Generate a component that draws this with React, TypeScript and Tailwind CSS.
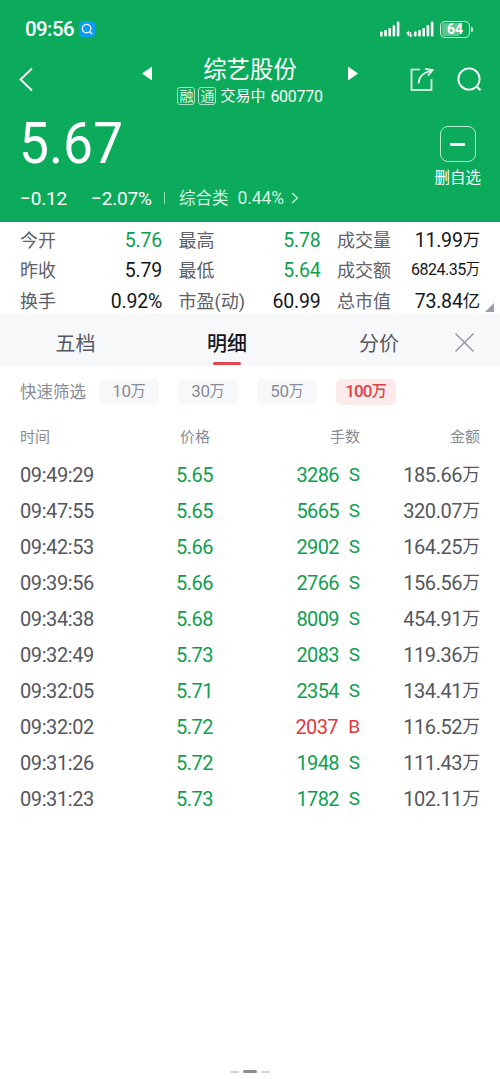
import React from 'react';
import clsx from 'clsx';

type Tone = 'down' | 'up' | 'flat';

const toneClass: Record<Tone, string> = {
  down: 'text-[#0d9f50]',
  up: 'text-[#e03a3e]',
  flat: 'text-[#15171b]',
};

const quotes: { label: string; value: string; tone: Tone; small?: boolean }[][] = [
  [
    { label: '今开', value: '5.76', tone: 'down' },
    { label: '最高', value: '5.78', tone: 'down' },
    { label: '成交量', value: '11.99万', tone: 'flat' },
  ],
  [
    { label: '昨收', value: '5.79', tone: 'flat' },
    { label: '最低', value: '5.64', tone: 'down' },
    { label: '成交额', value: '6824.35万', tone: 'flat', small: true },
  ],
  [
    { label: '换手', value: '0.92%', tone: 'flat' },
    { label: '市盈(动)', value: '60.99', tone: 'flat' },
    { label: '总市值', value: '73.84亿', tone: 'flat' },
  ],
];

const filters = ['10万', '30万', '50万', '100万'];

const trades = [
  { time: '09:49:29', price: '5.65', lots: '3286', side: 'S', amount: '185.66万' },
  { time: '09:47:55', price: '5.65', lots: '5665', side: 'S', amount: '320.07万' },
  { time: '09:42:53', price: '5.66', lots: '2902', side: 'S', amount: '164.25万' },
  { time: '09:39:56', price: '5.66', lots: '2766', side: 'S', amount: '156.56万' },
  { time: '09:34:38', price: '5.68', lots: '8009', side: 'S', amount: '454.91万' },
  { time: '09:32:49', price: '5.73', lots: '2083', side: 'S', amount: '119.36万' },
  { time: '09:32:05', price: '5.71', lots: '2354', side: 'S', amount: '134.41万' },
  { time: '09:32:02', price: '5.72', lots: '2037', side: 'B', amount: '116.52万' },
  { time: '09:31:26', price: '5.72', lots: '1948', side: 'S', amount: '111.43万' },
  { time: '09:31:23', price: '5.73', lots: '1782', side: 'S', amount: '102.11万' },
];

// The 万 / 亿 unit is set a little smaller than the digits before it
function Figure({ value, className }: { value: string; className?: string }) {
  const unit = /[万亿]$/.test(value) ? value.slice(-1) : '';
  return (
    <span className={className}>
      {unit ? value.slice(0, -1) : value}
      {unit && <span className="align-[0.04em] text-[0.89em] tracking-normal">{unit}</span>}
    </span>
  );
}

function Signal() {
  return (
    <svg width="20" height="16" viewBox="0 0 20 16" fill="currentColor">
      <rect x="0" y="10.5" width="2.6" height="5" rx="1" />
      <rect x="4.2" y="9" width="2.6" height="6.5" rx="1" />
      <rect x="8.4" y="7" width="2.6" height="8.5" rx="1" />
      <rect x="12.6" y="4" width="2.6" height="11.5" rx="1" />
      <rect x="16.8" y="0.5" width="2.6" height="15" rx="1" />
    </svg>
  );
}

function StatusBar() {
  return (
    <div className="flex h-[58px] items-center pl-[25px] pr-[27px]">
      <span className="w-[49px] text-[20.5px] font-medium leading-none tracking-[-0.6px]">09:56</span>
      <span className="ml-[5px] flex size-4 items-center justify-center rounded-[4px] bg-[#0d9cf5]">
        <svg width="12" height="12" viewBox="0 0 12 12" fill="none" stroke="currentColor" strokeWidth="1.2" strokeLinecap="round">
          <circle cx="5.6" cy="5.6" r="4.3" />
          <path d="M8.8 8.8 10.8 10.8" />
        </svg>
      </span>
      <div className="ml-auto flex items-center">
        <Signal />
        <svg className="ml-[6px]" width="8" height="16" viewBox="0 0 8 16" fill="none" stroke="currentColor" strokeWidth="1.3">
          <path d="M2.4 15V11L0.6 12.6M4.4 11V15.4L6.2 13.8" />
        </svg>
        <Signal />
        <span className="ml-[6px] flex h-[17px] w-[30px] rounded-[5px] border-[1.5px] border-[#d9f5e6] p-px">
          <span className="flex h-full w-full items-center justify-center rounded-[3px] bg-linear-to-r from-[#5cc48c] from-64% to-transparent to-64% text-[14px] font-bold leading-none">
            64
          </span>
        </span>
        <span className="ml-[1px] h-[5px] w-[2px] rounded-r bg-white" />
      </div>
    </div>
  );
}

function NavBar() {
  return (
    <div className="flex h-[54px] pl-[19px] pr-[18px]">
      <svg className="mt-[9px]" width="14" height="25" viewBox="0 0 14 25" fill="none" stroke="currentColor" strokeWidth="1.8">
        <path d="M13 1.5 1.5 12.5 13 23.5" />
      </svg>
      <svg className="ml-[109px] mt-[8px]" width="10" height="15" viewBox="0 0 10 15" fill="currentColor">
        <path d="M10 0.5V14.5L0 7.5Z" />
      </svg>
      <div className="flex w-[196px] flex-col items-center">
        <h1 className="mt-px text-[23.4px] font-normal leading-[22px]">综艺股份</h1>
        <div className="mt-[5px] flex h-[20px] items-center whitespace-nowrap text-[15px] leading-none">
          <span className="mr-[3px] flex size-[18px] items-center justify-center rounded-[3px] border border-[#a9e3c5] text-[14px] text-[#d6f4e4]">融</span>
          <span className="mr-[4px] flex size-[18px] items-center justify-center rounded-[3px] border border-[#a9e3c5] text-[14px] text-[#d6f4e4]">通</span>
          <span>交易中</span>
          <span className="ml-[5px] mt-px text-[16px] tracking-[-0.3px]">600770</span>
        </div>
      </div>
      <svg className="mt-[8px]" width="10" height="15" viewBox="0 0 10 15" fill="currentColor">
        <path d="M0 0.5V14.5L10 7.5Z" />
      </svg>
      <svg className="ml-auto mt-[9px]" width="24" height="25" viewBox="0 0 24 25" fill="none" stroke="currentColor" strokeWidth="1.7">
        <path d="M10 2.5H1.5V23H21.5V12" />
        <path d="M8.5 16.5C9 10 13 5.5 20.5 4" />
        <path d="M15 1.8 22.5 3.2 18 8.5" />
      </svg>
      <svg className="ml-[23px] mt-[9px]" width="25" height="25" viewBox="0 0 25 25" fill="none" stroke="currentColor" strokeWidth="1.8">
        <circle cx="12" cy="12" r="10.6" />
        <path d="M19.5 19.5 23.6 23.2" strokeWidth="2.2" />
      </svg>
    </div>
  );
}

function PricePanel() {
  return (
    <div className="flex h-[110px] justify-between pl-5 pr-[19px]">
      <div>
        <div className="-ml-px mt-[9px] h-[44px] origin-left scale-x-[0.92] text-[58px] leading-[44px]">5.67</div>
        <div className="mt-[23px] flex h-[20px] items-center whitespace-nowrap text-[19px] leading-none">
          <span className="w-[48px] tracking-[-0.2px]">−0.12</span>
          <span className="ml-[23px] w-[61px] tracking-[-0.2px]">−2.07%</span>
          <span className="ml-[12px] h-[12px] w-px bg-[#8fdcb5]" />
          <span className="ml-[14px] mt-[2px] text-[16.5px] text-[#d6f4e4]">综合类</span>
          <span className="ml-[9px] mt-px text-[17.5px] tracking-[-0.1px] text-[#d6f4e4]">0.44%</span>
          <svg className="ml-[7px]" width="8" height="12" viewBox="0 0 8 12" fill="none" stroke="#c5efd9" strokeWidth="1.4">
            <path d="M1 1 6.5 6 1 11" />
          </svg>
        </div>
      </div>
      <div className="flex flex-col items-center pt-[14px]">
        <span className="flex size-[36px] items-center justify-center rounded-[8px] border border-[#b9ebd1]">
          <span className="h-[3px] w-[15px] bg-white" />
        </span>
        <span className="mt-[6px] text-[15.5px] leading-[20px]">删自选</span>
      </div>
    </div>
  );
}

function Quotes() {
  return (
    <div className="relative h-[92px] px-5 pt-[4px]">
      {quotes.map((row, i) => (
        <div key={i} className={clsx('grid grid-cols-[142px_142px_143px] gap-x-[16.5px]', i === 2 ? 'mt-[2px]' : '')}>
          {row.map((q) => (
            <div key={q.label} className="flex h-[29.5px] items-center justify-between whitespace-nowrap leading-none">
              <span className="pt-px text-[18px] text-[#5d6068]">{q.label}</span>
              <Figure
                value={q.value}
                className={clsx(
                  toneClass[q.tone],
                  q.small ? 'text-[16px] tracking-[-0.5px]' : 'text-[19.5px] tracking-[-0.2px]'
                )}
              />
            </div>
          ))}
        </div>
      ))}
      <svg className="absolute bottom-[2px] right-[6px]" width="9" height="9" viewBox="0 0 9 9" fill="#9b9ea6">
        <path d="M9 0V9H0Z" />
      </svg>
    </div>
  );
}

function Tabs() {
  return (
    <div className="flex h-[52px] bg-[#f7f8fa] text-[20px] leading-[60px] text-[#55585f]">
      <span className="w-[151px] text-center">五档</span>
      <span className="flex w-[152px] flex-col items-center font-medium text-[#15171b]">
        <span className="h-[48px]">明细</span>
        <span className="h-[3px] w-[28px] rounded-full bg-[#e0484f]" />
      </span>
      <span className="w-[152px] text-center">分价</span>
      <svg className="mt-[19px]" width="19" height="19" viewBox="0 0 19 19" fill="none" stroke="#8d9098" strokeWidth="1.3">
        <path d="M0.5 0.5 18.5 18.5M18.5 0.5 0.5 18.5" />
      </svg>
    </div>
  );
}

function Filters() {
  return (
    <div className="flex h-[51px] items-center pl-5 text-[16.5px] leading-none text-[#878c96]">
      <span className="mr-[13px] mt-[3px]">快速筛选</span>
      <div className="flex gap-[19px]">
        {filters.map((f) => (
          <span
            key={f}
            className={clsx(
              'flex h-[26px] w-[60px] items-center justify-center rounded-[5px] text-[17px]',
              f === '100万' ? 'bg-[#fdebec] font-medium tracking-[-0.8px] text-[#e0404a]' : 'bg-[#f7f8fa] tracking-[-0.4px]'
            )}
          >
            <Figure value={f} />
          </span>
        ))}
      </div>
    </div>
  );
}

function TradeList() {
  return (
    <div className="px-5">
      <div className="grid h-[39px] grid-cols-[118px_75px_147px_120px] items-center pt-[2px] text-right text-[15px] leading-none text-[#878c96]">
        <span className="text-left">时间</span>
        <span className="pr-[3px]">价格</span>
        <span>手数</span>
        <span>金额</span>
      </div>
      {trades.map((t) => (
        <div
          key={t.time}
          className="grid h-[36.1px] grid-cols-[118px_75px_147px_120px] items-center pt-px text-right text-[20px] leading-none text-[#54575e]"
        >
          <span className="text-left tracking-[-0.4px]">{t.time}</span>
          <span className="tracking-[-0.5px] text-[#0d9f50]">{t.price}</span>
          <span className={clsx('flex justify-end', t.side === 'B' ? 'text-[#e03a3e]' : 'text-[#0d9f50]')}>
            <span className="tracking-[-0.6px]">{t.lots}</span>
            <span className={clsx('text-[19px] leading-[20px]', t.side === 'B' ? 'w-[22px]' : 'w-[21px]')}>{t.side}</span>
          </span>
          <Figure value={t.amount} className="tracking-[-0.4px]" />
        </div>
      ))}
    </div>
  );
}

function App() {
  return (
    <div className="flex h-[1079px] w-[500px] flex-col overflow-hidden bg-white font-[Roboto,'Noto_Sans_CJK_SC',sans-serif]">
      <header className="h-[222px] bg-[#0bab5b] text-white">
        <StatusBar />
        <NavBar />
        <PricePanel />
      </header>
      <Quotes />
      <Tabs />
      <Filters />
      <TradeList />
      <div className="mb-[6px] mt-auto flex items-center justify-center gap-[4px]">
        <span className="h-[2px] w-[9px] rounded-full bg-[#d2d2d2]" />
        <span className="h-[3px] w-[14px] rounded-full bg-[#8e8e8e]" />
        <span className="h-[2px] w-[9px] rounded-full bg-[#d2d2d2]" />
      </div>
    </div>
  );
}

export default App;
